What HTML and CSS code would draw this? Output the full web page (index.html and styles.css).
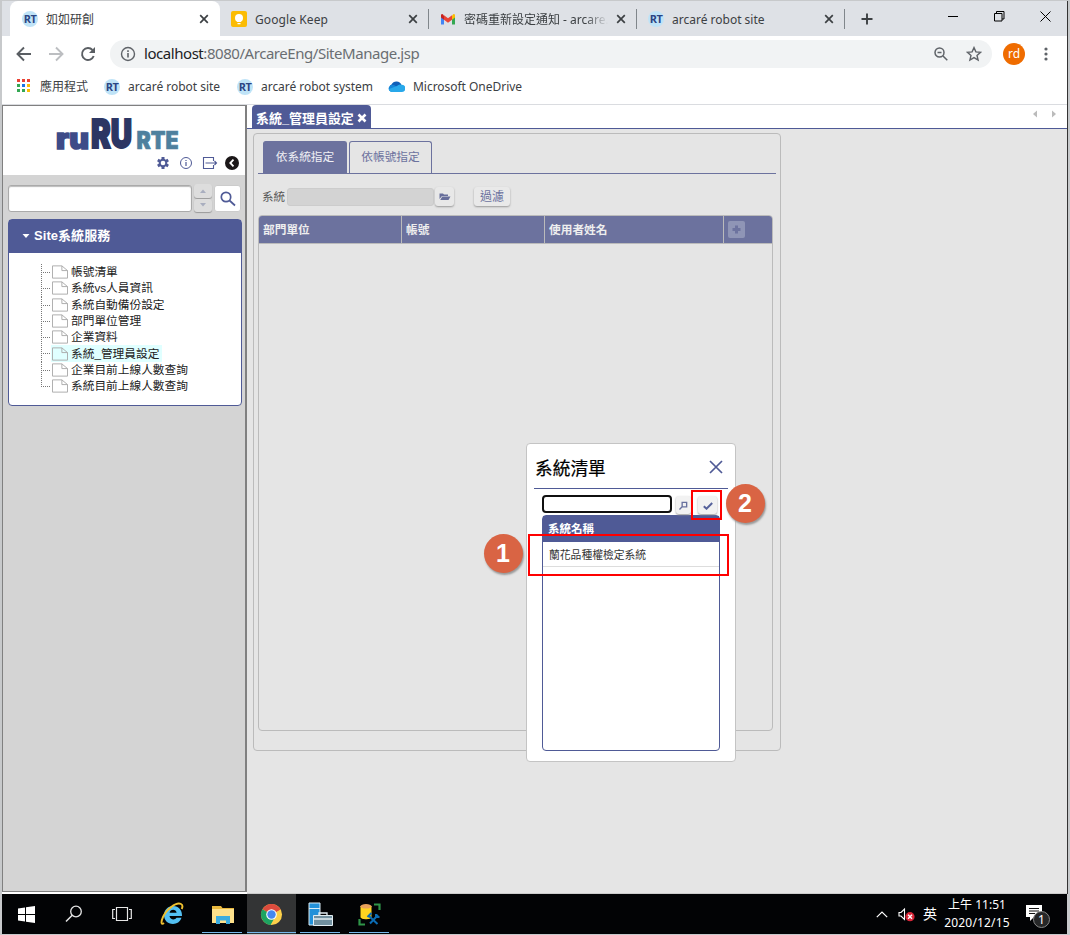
FILE: index.html
```html
<!DOCTYPE html>
<html lang="zh-Hant">
<head>
<meta charset="utf-8">
<title>如如研創</title>
<link rel="stylesheet" href="styles.css">
</head>
<body>
<div class="desktop">
  <div class="browser">
    <div class="tabstrip">
      <div class="tab tab-active"><span class="rt">RT</span><span class="tab-title">如如研創</span><svg class="x" viewBox="0 0 10 10"><path d="M1.200 1.200l7.600 7.600M8.800 1.200l-7.600 7.600"/></svg></div>
      <div class="tab tab-keep"><svg class="fav" viewBox="0 0 16 16"><rect width="16" height="16" rx="2" fill="#fbbc04"/><circle cx="8" cy="7" r="4" fill="#fff"/><path d="M6 9h4v2H6zM6.500 12h3v1.200h-3z" fill="#fff"/></svg><span class="tab-title keep-title">Google Keep</span><svg class="x" viewBox="0 0 10 10"><path d="M1.200 1.200l7.600 7.600M8.800 1.200l-7.600 7.600"/></svg></div>
      <div class="tab tab-gmail"><svg class="fav" viewBox="0 0 16 16"><path d="M1 4v9.500h3V7z" fill="#4285f4"/><path d="M15 4v9.500h-3V7z" fill="#34a853"/><path d="M1 3.500v3l3 2.200V4.500L2.500 3z" fill="#c5221f"/><path d="M4 4.300l4 3 4-3v4.400l-4 3-4-3z" fill="#ea4335"/><path d="M12 4.500v4.200l3-2.200v-3L13.500 3z" fill="#fbbc04"/></svg><span class="tab-title gmail-title">密碼重新設定通知 - arcare.</span><svg class="x" viewBox="0 0 10 10"><path d="M1.200 1.200l7.600 7.600M8.800 1.200l-7.600 7.600"/></svg></div>
      <div class="tab tab-site"><span class="rt">RT</span><span class="tab-title site-title">arcaré robot site</span><svg class="x" viewBox="0 0 10 10"><path d="M1.200 1.200l7.600 7.600M8.800 1.200l-7.600 7.600"/></svg></div>
      <svg class="newtab" viewBox="0 0 12 12"><path d="M6 .5v11M.5 6h11" stroke="#3c4043" stroke-width="1.900"/></svg>
      <div class="winctl">
        <svg width="11" height="11" viewBox="0 0 11 11"><path d="M0 5.500h10" stroke="#000"/></svg>
        <svg width="11" height="11" viewBox="0 0 11 11"><path d="M.5 2.500h7.500v7.500H.5zM2.500 2.500v-2H10v7.500H8" fill="none" stroke="#000"/></svg>
        <svg width="11" height="11" viewBox="0 0 11 11"><path d="M.5.5l10 10M10.500.5l-10 10" stroke="#000"/></svg>
      </div>
    </div>
    <div class="toolbar">
      <svg class="nav" viewBox="0 0 16 16"><path d="M15 8H2M8 1.500L1.500 8 8 14.500" stroke="#5a5e63"/></svg>
      <svg class="nav" viewBox="0 0 16 16"><path d="M1 8h13M8 1.500L14.500 8 8 14.500" stroke="#bcbec1"/></svg>
      <svg class="nav" viewBox="0 0 16 16"><path d="M13.700 10A6 6 0 1 1 12.500 4" stroke="#5a5e63"/><path d="M15 1v6H9z" fill="#5a5e63"/></svg>
      <div class="omnibox">
        <svg class="info" viewBox="0 0 16 16"><circle cx="8" cy="8" r="6.500" fill="none" stroke="#5f6368" stroke-width="1.400"/><path d="M8 7v4.500M8 4.300V6" stroke="#5f6368" stroke-width="1.600"/></svg>
        <span class="url"><b>localhost</b>:8080/ArcareEng/SiteManage.jsp</span>
        <svg class="zoomout" viewBox="0 0 14 14"><circle cx="5.500" cy="5.500" r="4.500"/><path d="M9 9l4.300 4.300M3.500 5.500h4"/></svg>
        <svg class="star" viewBox="0 0 16 16"><path d="M8 1.600l1.900 4.300 4.700.4-3.600 3.100 1.100 4.600L8 11.600 3.900 14 5 9.400 1.400 6.300l4.700-.4z"/></svg>
      </div>
      <span class="avatar">rd</span>
      <svg class="dots" viewBox="0 0 4 14"><circle cx="2" cy="2" r="1.600"/><circle cx="2" cy="7" r="1.600"/><circle cx="2" cy="12" r="1.600"/></svg>
    </div>
    <div class="bookmarks">
      <svg class="apps" viewBox="0 0 13 13"><path d="M0 0h3v3H0zM5 0h3v3H5zM10 0h3v3h-3z" fill="#ea4335"/><path d="M0 5h3v3H0zM0 10h3v3H0z" fill="#34a853"/><path d="M5 5h3v3H5z" fill="#1a73e8"/><path d="M10 5h3v3h-3zM10 10h3v3h-3z" fill="#fbbc04"/><path d="M5 10h3v3H5z" fill="#34a853"/></svg>
      <span class="bm bm-apps">應用程式</span>
      <span class="rt">RT</span><span class="bm bm-site">arcaré robot site</span>
      <span class="rt">RT</span><span class="bm bm-system">arcaré robot system</span>
      <svg class="cloud" viewBox="0 0 17 11"><path d="M4 10a3.500 3.500 0 0 1-.5-6.500A5.500 5.500 0 0 1 13.500 4z" fill="#0f5fb8"/><path d="M1 6a4 4 0 0 1 5-2l5 3-7 4A3.500 3.500 0 0 1 1 6z" fill="#1485d8"/><path d="M9 5a4 4 0 0 1 4.500-1.200A3.600 3.600 0 0 1 14 11H4C1.500 10.500 1 9 1 8z" fill="#28a8ea"/></svg>
      <span class="bm bm-drive">Microsoft OneDrive</span>
    </div>
    <div class="page">
      <aside class="sidebar">
        <div class="brand">
          <svg class="logo" viewBox="0 0 126 36"><text x="2" y="32.500" class="lg-ru" textLength="33" lengthAdjust="spacingAndGlyphs">ru</text><text x="37" y="32" class="lg-big" textLength="41" lengthAdjust="spacingAndGlyphs">RU</text><text x="82.500" y="32.500" class="lg-rte" textLength="42" lengthAdjust="spacingAndGlyphs">RTE</text></svg>
          <div class="tools">
            <svg viewBox="0 0 14 14"><path d="M7 1v12M1.800 4l10.400 6M12.200 4L1.800 10" stroke="#4f5a96" stroke-width="3"/><circle cx="7" cy="7" r="3.300" fill="#fff" stroke="#4f5a96" stroke-width="2"/></svg>
            <svg viewBox="0 0 14 14"><circle cx="7" cy="7" r="5.500" fill="none" stroke="#4f5a96"/><path d="M7 6v4M7 4v1" stroke="#4f5a96" stroke-width="1.200"/></svg>
            <svg class="exit" viewBox="0 0 15 14"><path d="M11 5V1.500H1v11h10V9M3 7h11M12 5l2 2-2 2" fill="none" stroke="#4f5a96" stroke-width="1.100"/></svg>
            <svg viewBox="0 0 14 14"><circle cx="7" cy="7" r="7" fill="#1b1718"/><path d="M8.500 3.700L5.300 7l3.200 3.300" fill="none" stroke="#fff" stroke-width="1.800"/></svg>
          </div>
        </div>
        <div class="finder">
          <div class="field"></div>
          <div class="spin"><i><svg viewBox="0 0 8 4"><path d="M1 4l3-3.500L7 4z"/></svg></i><i><svg viewBox="0 0 8 4"><path d="M1 0l3 3.500L7 0z"/></svg></i></div>
          <div class="go"><svg viewBox="0 0 16 16"><circle cx="6" cy="6" r="4.700"/><path d="M9.500 9.500l5.500 5"/></svg></div>
        </div>
        <section class="menu">
          <header><svg viewBox="0 0 8 4"><path d="M.5 0h7L4 4z" fill="#fff"/></svg><span>Site系統服務</span></header>
          <ul>
            <li><span><svg viewBox="0 0 17 14"><path d="M.5.5h10l6 5v8H.5zM10.500.5v5h6"/></svg>帳號清單</span></li>
            <li><span><svg viewBox="0 0 17 14"><path d="M.5.5h10l6 5v8H.5zM10.500.5v5h6"/></svg>系統vs人員資訊</span></li>
            <li><span><svg viewBox="0 0 17 14"><path d="M.5.5h10l6 5v8H.5zM10.500.5v5h6"/></svg>系統自動備份設定</span></li>
            <li><span><svg viewBox="0 0 17 14"><path d="M.5.5h10l6 5v8H.5zM10.500.5v5h6"/></svg>部門單位管理</span></li>
            <li><span><svg viewBox="0 0 17 14"><path d="M.5.5h10l6 5v8H.5zM10.500.5v5h6"/></svg>企業資料</span></li>
            <li class="on"><span><svg viewBox="0 0 17 14"><path d="M.5.5h10l6 5v8H.5zM10.500.5v5h6"/></svg>系統_管理員設定</span></li>
            <li><span><svg viewBox="0 0 17 14"><path d="M.5.5h10l6 5v8H.5zM10.500.5v5h6"/></svg>企業目前上線人數查詢</span></li>
            <li><span><svg viewBox="0 0 17 14"><path d="M.5.5h10l6 5v8H.5zM10.500.5v5h6"/></svg>系統目前上線人數查詢</span></li>
          </ul>
        </section>
      </aside>
      <main class="content">
        <div class="doc-tabs">
          <div class="doc-tab"><span>系統_管理員設定</span><svg viewBox="0 0 10 10"><path d="M1.500 1.500l7 7M8.500 1.500l-7 7" stroke="#fff" stroke-width="2.600"/></svg></div>
          <div class="arrows"><svg viewBox="0 0 4 8"><path d="M4 .5v7L0 4z"/></svg><svg viewBox="0 0 4 8"><path d="M0 .5v7L4 4z"/></svg></div>
        </div>
        <div class="panel">
          <div class="inner-tabs"><span class="it it-on">依系統指定</span><span class="it">依帳號指定</span></div>
          <div class="filter"><label>系統</label><span class="dis"></span><span class="btn folder"><svg viewBox="0 0 12 9"><path d="M.5 7V1.500h3.500L5 2.500h4V4H3z" fill="#676e9b"/><path d="M3.300 4.500h8.200L9.500 8H1.200z" fill="#676e9b"/></svg></span><span class="btn word">過濾</span></div>
          <div class="grid">
            <div class="grid-head"><span>部門單位</span><span>帳號</span><span>使用者姓名</span><span class="plus-cell"><i><svg viewBox="0 0 9 9"><path d="M4.500.5v8M.5 4.500h8" stroke="#6d739f" stroke-width="3"/></svg></i></span></div>
          </div>
        </div>
      </main>
    </div>
  </div>

  <div class="dialog">
    <div class="dlg-head"><h2>系統清單</h2><svg viewBox="0 0 14 14"><path d="M1 1l12 12M13 1L1 13" stroke="#4f5a96" stroke-width="1.700"/></svg></div>
    <div class="dlg-search"><span class="dlg-input"></span><span class="btn mag"><svg viewBox="0 0 10 10"><path d="M3.500 1.500h5v5h-5zM3.500 6.500L.5 9.500" fill="none" stroke="#68719f" stroke-width="1.500"/></svg></span><span class="btn ok"><svg viewBox="0 0 10 8"><path d="M.8 4.200l2.700 2.500L9.200 1" fill="none" stroke="#56629b" stroke-width="2"/></svg></span></div>
    <div class="dlg-list"><div class="dlg-th">系統名稱</div><div class="dlg-row">蘭花品種權檢定系統</div></div>
  </div>
  <div class="mark mark-row"></div>
  <div class="mark mark-ok"></div>
  <div class="step step-one">1</div>
  <div class="step step-two">2</div>

  <footer class="taskbar">
    <div class="cell"><svg width="17" height="17" viewBox="0 0 17 17"><path d="M0 2.500L7 1.500v6.500H0zM8 1.300L17 0v8H8zM0 9h7v6.500l-7-1zM8 9h9v8l-9-1.300z" fill="#fff"/></svg></div>
    <div class="cell"><svg width="18" height="18" viewBox="0 0 18 18"><circle cx="11" cy="6.500" r="5.300" fill="none" stroke="#e6e6e6" stroke-width="1.300"/><path d="M7.200 10.300L1 16.500" stroke="#e6e6e6" stroke-width="1.500"/></svg></div>
    <div class="cell"><svg width="20" height="16" viewBox="0 0 20 16"><path d="M4.500 1.500h11v13h-11zM3 3.500H.7v9H3M17 3.500h2.300v9H17" fill="none" stroke="#e6e6e6" stroke-width="1.200"/></svg></div>
    <div class="cell ie"><svg width="24" height="24" viewBox="0 0 24 24"><path d="M22 14H9.500c.5 4 5.500 4.300 7 1.800h5C20 20 17 22 13 22 7.500 22 4 18 4 13s4-9 9-9c6 0 9.300 4.500 9 10zM9.600 10.700h7C16.300 6.700 10 6.700 9.600 10.700z" fill="#53c0f2"/><path d="M4 21c-3 2.500-3.200-1-1-6C6 8 16-.5 21 2c2 1 1.500 3.300.7 5" fill="none" stroke="#efc02f" stroke-width="1.900"/></svg></div>
    <div class="cell open"><svg width="22" height="19" viewBox="0 0 22 19"><path d="M0 1h9l1.500 2H22v15H0z" fill="#e8b83e"/><path d="M0 4h22v14H0z" fill="#fde08b"/><path d="M4 19v-8h14v8h-4v-3.500H8V19z" fill="#3cacdf"/></svg></div>
    <div class="cell open current"><svg width="23" height="23" viewBox="0 0 24 24"><circle cx="12" cy="12" r="11" fill="#fdd04a"/><path d="M2.500 6.500A11 11 0 0 1 21.500 6.500L12 12z" fill="#dc4b3e"/><path d="M2.500 6.500A11 11 0 0 0 11 23l5-9-4-2z" fill="#1da462"/><path d="M12 6.500h9.500L12 12z" fill="#dc4b3e"/><circle cx="12" cy="12" r="5.500" fill="#fff"/><circle cx="12" cy="12" r="4.400" fill="#4688f1"/></svg></div>
    <div class="cell open"><svg width="25" height="25" viewBox="0 0 25 25"><path d="M1 1h11v22H1z" fill="#2291d9" stroke="#d7ecf6"/><path d="M1 6.500h11" stroke="#d7ecf6"/><path d="M5.500 13.500h19v10h-19z" fill="#71909f" stroke="#e2edf2"/><path d="M11 13v-2h8v2M6 17h18" fill="none" stroke="#e2edf2" stroke-width="1.300"/></svg></div>
    <div class="cell open"><svg width="23" height="23" viewBox="0 0 23 23"><path d="M2.500 3v11c0 3 11 3 11 0V3z" fill="#fed421"/><ellipse cx="8" cy="3.300" rx="5.500" ry="2.300" fill="#e9a15b"/><path d="M16 1.500h5.500V7M1.500 16v5.500H7" fill="none" stroke="#2f9448" stroke-width="2.200"/><path d="M10.500 12.500l9 8.500M20 12l-8 8.500" stroke="#0b6cb4" stroke-width="2"/><path d="M9.500 14l4-4M18 11v3h3.500" fill="none" stroke="#0b6cb4" stroke-width="2"/></svg></div>
    <div class="tray">
      <svg class="chev" viewBox="0 0 12 7"><path d="M.8 6.200L6 1l5.200 5.200" fill="none" stroke="#fff" stroke-width="1.200"/></svg>
      <svg class="snd" viewBox="0 0 17 15"><path d="M1 5.500h2L6.500 2v10.500L3 9H1z" fill="none" stroke="#fff" stroke-width="1.100"/><circle cx="12" cy="9.700" r="4.600" fill="#d92638"/><path d="M10 7.700l4 4M14 7.700l-4 4" stroke="#fff" stroke-width="1.300"/></svg>
      <span class="ime">英</span>
      <span class="clock"><span>上午 11:51</span><span class="date">2020/12/15</span></span>
      <div class="note"><svg viewBox="0 0 16 16"><path d="M0 0h16v12H8l-4 4v-4H0z" fill="#fff"/><path d="M3 3.500h10M3 6h10M3 8.500h6" stroke="#111"/></svg><span class="badge">1</span></div>
    </div>
  </footer>
</div>
</body>
</html>
```

FILE: styles.css
```css
* { box-sizing: border-box; }
body { margin: 0; font-family: "Liberation Sans", "Noto Sans CJK TC", sans-serif; font-size: 12px; color: #333; overflow: hidden; }
svg { display: block; flex: none; }
i { font-style: normal; }
.desktop { position: relative; width: 1070px; height: 935px; background: #c7c9cb; padding: 1px 3px 1px 2px; display: flex; flex-direction: column; }
.browser { height: 893px; flex: none; background: #fff; border-right: 1px solid #333; width: 1066px; }
.tabstrip { height: 35px; background: #dee1e6; display: flex; align-items: center; font-family: "Noto Sans", "Noto Sans CJK TC", sans-serif; font-size: 12px; color: #3c4043; }
.tab { height: 35px; display: flex; align-items: center; padding-top: 1px; }
.tab .x { width: 10px; height: 10px; margin-left: auto; fill: none; stroke: #3c4043; stroke-width: 1.700; }
.tab-title { white-space: nowrap; overflow: hidden; margin-left: 8px; }
.tab-active { width: 210px; margin-left: 8px; background: #fff; border-radius: 8px 8px 0 0; padding: 1px 11px 0 12px; }
.tab-keep { width: 209px; padding: 1px 11px 0 11px; }
.keep-title { letter-spacing: .1px; }
.tab-gmail { width: 208px; padding: 1px 11px 0 11px; }
.tab-keep, .tab-gmail, .tab-site { background: linear-gradient(#80868b, #80868b) right center / 1px 20px no-repeat; }
.tab-site { width: 208px; padding: 1px 11px 0 11px; }
.gmail-title { width: 144px; -webkit-mask-image: linear-gradient(90deg, #000 84%, transparent); }
.fav { width: 16px; height: 16px; }
.rt { width: 16px; height: 16px; flex: none; border-radius: 50%; background: #bfe3f7; color: #2b4583; font: bold 11px/16px "Open Sans", sans-serif; letter-spacing: -.5px; display: flex; justify-content: center; align-items: center; }
.newtab { width: 12px; height: 12px; margin-left: 16px; }
.winctl { display: flex; gap: 35px; margin-left: 75px; margin-bottom: 5px; }
.toolbar { height: 36px; display: flex; align-items: center; padding-left: 14px; }
.nav { width: 16px; height: 16px; margin-right: 16px; fill: none; stroke-width: 1.900; }
.omnibox { width: 882px; height: 28px; border-radius: 14px; background: #f1f3f4; display: flex; align-items: center; padding-left: 10px; margin-left: -2px; }
.info { width: 16px; height: 16px; margin-right: 8px; }
.url { font: 15px/24px "Noto Sans", sans-serif; color: #6a6e72; letter-spacing: -.45px; margin-top: -2px; }
.url b { font-weight: 400; color: #202124; }
.zoomout { width: 14px; height: 14px; margin-left: auto; margin-right: 18px; fill: none; stroke: #5f6368; stroke-width: 1.500; }
.star { width: 16px; height: 16px; margin-right: 10px; fill: none; stroke: #5f6368; stroke-width: 1.400; }
.avatar { width: 22px; height: 22px; border-radius: 50%; background: #ef6c00; color: #fff; margin-left: 11px; font: 12px/21px "Noto Sans", sans-serif; text-align: center; }
.dots { width: 4px; height: 14px; margin-left: 19px; fill: #5f6368; }
.bookmarks { height: 33px; display: flex; align-items: center; padding: 0 0 3px 15px; border-bottom: 1px solid #dadce0; font: 12px/16px "Noto Sans", "Noto Sans CJK TC", sans-serif; color: #3c4043; white-space: nowrap; }
.apps { width: 13px; height: 13px; margin-right: 10px; margin-top: -2px; }
.bm { margin-left: 8px; letter-spacing: -.03px; }
.bm-apps { margin: 0 16px 0 0; width: 48px; }
.bm-site { width: 92px; margin-right: 17px; }
.bm-system { width: 112px; margin-right: 15px; }
.cloud { width: 17px; height: 11px; }
.page { height: 789px; display: flex; }
.sidebar { width: 245px; height: 787px; margin-top: 0; border: 1px solid #808080; border-right-width: 2px; background: #d4d4d4; }
.brand { height: 69px; background: #fff; padding: 10px 6px 0 51px; }
.logo { width: 126px; height: 36px; overflow: visible; }
.logo text { font-family: Inter, sans-serif; font-weight: 900; }
.lg-ru { font-size: 28px; fill: #3e4b88; stroke: #3e4b88; stroke-width: 1.500; }
.lg-big { font-size: 40px; fill: #2c3663; stroke: #2c3663; stroke-width: 2; }
.lg-rte { font-size: 24px; fill: #4e809e; stroke: #4e809e; stroke-width: .7; }
.tools { display: flex; justify-content: flex-end; gap: 9px; margin-top: 4px; }
.tools svg { width: 14px; height: 14px; }
.tools .exit { width: 16px; margin-right: -2px; }
.finder { display: flex; padding: 10px 4px 0 5px; height: 37px; }
.field { width: 184px; height: 27px; background: #fff; border: 1px solid #aaa; border-radius: 3px; box-shadow: inset 0 1px 1px #bbb; }
.spin { width: 18px; margin: -1px 2px 0 2px; display: flex; flex-direction: column; gap: 1px; }
.spin i { height: 14px; background: #ddd; border-radius: 3px; box-shadow: 0 1px 1px #999; display: flex; align-items: center; justify-content: center; }
.spin svg { width: 8px; height: 4px; fill: #a9aebf; }
.go { width: 27px; height: 27px; background: #fff; border: 1px solid #ccc; border-radius: 3px; display: flex; align-items: center; justify-content: center; }
.go svg { width: 16px; height: 16px; fill: none; stroke: #4f5a96; stroke-width: 1.700; }
.menu { width: 234px; height: 187px; margin: 7px 0 0 5px; border: 1px solid #4f5a96; border-radius: 4px; background: #fff; }
.menu header { height: 33px; background: #4f5a96; color: #fff; display: flex; align-items: center; padding: 0 0 2px 13px; font-weight: 700; font-size: 13px; line-height: 18px; white-space: nowrap; }
.menu header svg { width: 8px; height: 4px; margin-right: 4px; }
.menu header span { letter-spacing: .05px; }
.menu ul { list-style: none; margin: 0; padding: 11px 0 0 32px; }
.menu li { width: 160px; height: 16.300px; padding-left: 10px; font-size: 11.700px; line-height: 16px; color: #222; background: repeating-linear-gradient(90deg, #777 0 1px, transparent 1px 2px) 2px 8px / 8px 1px no-repeat, repeating-linear-gradient(#777 0 1px, transparent 1px 2px) 0 0 / 1px 100% no-repeat; white-space: nowrap; display: flex; }
.menu li span { display: inline-flex; align-items: center; padding: 0 3px 0 1px; }
.menu li.on span { background: #e0ffff; }
.menu li:last-child { background-size: 8px 1px, 1px 9px; }
.menu li svg { width: 16px; height: 14px; margin-right: 3px; fill: #fff; stroke: #aaa; }
.menu li.on svg { fill: none; }
.content { width: 820px; height: 789px; background: #e5e5e5; border-bottom: 1px solid #ccc; }
.doc-tabs { height: 24px; background: #fff; border-bottom: 1px solid #4f5a96; display: flex; padding-left: 5px; }
.doc-tab { width: 119px; background: #4f5a96; color: #fff; border-radius: 4px 4px 0 0; font-weight: 700; font-size: 12.950px; line-height: 18px; display: flex; padding: 5px 4px 0 4px; white-space: nowrap; }
.doc-tab span { width: 98px; }
.doc-tab svg { width: 10px; height: 10px; margin: 3px 0 0 3px; }
.arrows { margin-left: auto; display: flex; gap: 15px; padding: 5px 11px 0 0; }
.arrows svg { width: 4px; height: 8px; fill: #bbb; }
.panel { width: 528px; height: 618px; margin: 4px 0 0 6px; border: 1px solid #bbb; border-radius: 4px; padding: 7px 4px 0 4px; }
.inner-tabs { height: 33px; border-bottom: 1px solid #6c729e; display: flex; gap: 2px; padding-left: 5px; width: 518px; }
.it { width: 83px; height: 32px; border: 1px solid #6c729e; border-bottom: 0; border-radius: 3px 3px 0 0; text-align: center; line-height: 30px; font-size: 11.700px; color: #6c729e; white-space: nowrap; }
.it-on { width: 84px; background: #6c729e; color: #f0f0f5; }
.filter { display: flex; align-items: center; margin-top: 13px; padding-left: 4px; height: 19px; }
.filter label { width: 25px; font-size: 11.500px; line-height: 18px; color: #555; white-space: nowrap; }
.dis { width: 147px; height: 18px; background: #d3d3d3; border: 1px solid #ccc; border-radius: 3px; }
.btn { height: 19px; background: #f2f2f2; border-radius: 3px; box-shadow: 0 1px 2px #999; display: flex; align-items: center; justify-content: center; }
.folder { width: 19px; margin-left: 1px; background: #e8e8e8; }
.folder svg { width: 12px; height: 9px; }
.word { width: 36px; margin-left: 20px; color: #6c729e; background: #e9e9e9; font-size: 12px; line-height: 18px; }
.grid { width: 515px; height: 516px; margin-top: 9px; border: 1px solid #bbb; border-radius: 4px; overflow: hidden; }
.grid-head { height: 28px; background: #6c729e; border-bottom: 1px solid #bbb; display: flex; color: #eee; font-weight: 700; font-size: 11.700px; line-height: 27px; }
.grid-head span { width: 143px; padding-left: 4px; border-right: 1px solid #bbb; }
.grid-head span:nth-child(3) { width: 179px; }
.grid-head .plus-cell { width: 48px; border: 0; padding: 5px 0 0 4px; }
.plus-cell i { width: 17px; height: 17px; background: #8f95b6; border-radius: 2px; display: flex; align-items: center; justify-content: center; }
.plus-cell svg { width: 9px; height: 9px; }
.dialog { position: absolute; left: 526px; top: 443px; width: 210px; height: 319px; background: #fff; border: 1px solid #c4c4c4; border-radius: 4px; padding: 0 7px; }
.dlg-head { height: 45px; border-bottom: 1px solid #4f5a96; display: flex; justify-content: space-between; align-items: center; padding: 1px 5px 0 1px; }
.dlg-head h2 { margin: 0; font-size: 17.700px; line-height: 24px; font-weight: 400; color: #000; padding-top: 5px; -webkit-text-stroke: .2px #000; }
.dlg-head svg { width: 14px; height: 14px; }
.dlg-search { display: flex; padding: 6px 0 0 8px; height: 26px; }
.dlg-input { width: 130px; height: 18px; border: 2px solid #101010; border-radius: 4px; }
.mag { width: 15px; margin: 1px 0 0 4px; height: 18px; }
.mag svg { width: 9px; height: 9px; }
.ok { width: 19px; margin: 1px 0 0 7px; height: 18px; }
.ok svg { width: 10px; height: 8px; margin-top: 2px; }
.dlg-list { width: 178px; height: 236px; margin-left: 8px; border: 1px solid #4f5a96; border-radius: 4px; }
.dlg-th { height: 26px; background: #4f5a96; color: #fff; font-weight: 700; font-size: 11.500px; line-height: 27px; padding-left: 5px; }
.dlg-row { height: 25px; border-bottom: 1px solid #ddd; font-size: 10.800px; line-height: 26px; color: #333; padding-left: 6px; white-space: nowrap; }
.mark { position: absolute; border: 2px solid #ff0000; }
.mark-row { left: 528px; top: 534px; width: 201px; height: 42px; }
.mark-ok { left: 691px; top: 490px; width: 31px; height: 30px; }
.step { position: absolute; width: 39px; height: 39px; border-radius: 50%; background: #d96444; color: #fff; box-shadow: 1px 2px 2px #999; font: bold 25px/38px "Liberation Sans", sans-serif; text-align: center; padding-right: 1px; }
.step-one { left: 484px; top: 534px; }
.step-two { left: 726px; top: 484px; }
.taskbar { height: 40px; width: 1065px; background: #020305; display: flex; color: #fff; }
.cell { width: 48px; display: flex; align-items: center; justify-content: center; position: relative; flex: none; }
.cell.ie { width: 52px; padding: 0; }
.cell.open { width: 49px; }
.open::after { content: ""; position: absolute; bottom: 1px; left: 4px; width: 40px; height: 1px; background: #76b9ed; }
.current { background: #333435; }
.current::after { left: 0; width: 49px; }
.tray { margin-left: auto; display: flex; align-items: center; padding-right: 17px; font-family: "Noto Sans", "Noto Sans CJK TC", sans-serif; }
.chev { width: 12px; height: 7px; margin-right: 10px; }
.snd { width: 17px; height: 15px; margin-right: 8px; }
.ime { font-size: 14px; line-height: 18px; width: 14px; }
.clock { width: 66px; margin: 0 16px 0 7px; display: flex; flex-direction: column; text-align: center; font-size: 12px; line-height: 18px; white-space: nowrap; }
.date { letter-spacing: .15px; }
.note { position: relative; width: 24px; height: 24px; padding-top: 3px; }
.note svg { width: 16px; height: 16px; }
.badge { position: absolute; left: 7px; top: 9px; width: 17px; height: 17px; border: 1px solid #888; border-radius: 50%; background: #262728; font-size: 12px; line-height: 15px; text-align: center; }
```
